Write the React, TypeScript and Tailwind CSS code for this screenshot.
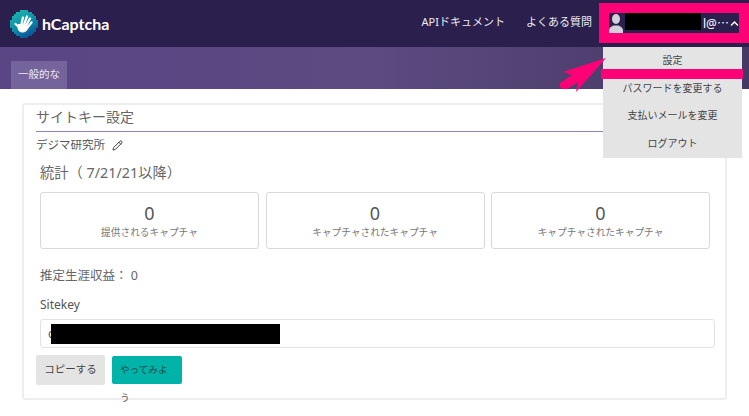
import React from 'react';
import { FaChevronUp } from 'react-icons/fa';
import { LuPencil } from 'react-icons/lu';

const stats = ['提供されるキャプチャ', 'キャプチャされたキャプチャ', 'キャプチャされたキャプチャ'];

const Logo: React.FC = () => (
  <svg width="28" height="28" viewBox="0 0 28 28" className="shrink-0">
    <defs>
      <linearGradient id="logo-fill" x1="0.150" y1="0.100" x2="0.650" y2="1">
        <stop offset="0" stopColor="#19b3ad" />
        <stop offset="0.550" stopColor="#0c8aa6" />
        <stop offset="1" stopColor="#0a4f9a" />
      </linearGradient>
    </defs>
    <path
      d="M10 0h8v2h4v2h2v2h2v4h2v8h-2v4h-2v2h-2v2h-4v2h-8v-2H6v-2H4v-2H2v-4H0v-8h2V6h2V4h2V2h4z"
      fill="url(#logo-fill)"
    />
    {/* waving hand */}
    <g stroke="#fff" strokeWidth="2.300" strokeLinecap="round" fill="none">
      <path d="M11 16L13 7.500" />
      <path d="M13.500 16L17 6.500" />
      <path d="M15.500 16.500L20 8.500" />
      <path d="M17 18L21.500 12.500" />
      <path d="M11 19L5.500 14" />
    </g>
    <path d="M8 14h9l1.500 4c-1.500 3-3.500 4.500-6 4.500-2.800 0-4.500-2-5-4.500z" fill="#fff" />
  </svg>
);

const Avatar: React.FC = () => (
  <svg width="14" height="20" viewBox="0 0 14 20" className="shrink-0">
    <ellipse cx="7" cy="6" rx="4" ry="5" fill="#d2d0da" />
    <path d="M0 20v-3c.5-3 3-3.500 4.500-4.500h5c1.500 1 4 1.500 4.500 4.500v3z" fill="#d2d0da" />
  </svg>
);

const App: React.FC = () => {
  return (
    <div lang="ja" className="relative w-[749px] h-[416px] overflow-hidden bg-white font-['Noto_Sans','Noto_Sans_CJK_JP',sans-serif] text-[#555]">
      <header className="h-[47px] bg-[#2a1f4d] flex items-center pl-[10px]">
        <Logo />
        <span className="ml-[4px] font-['Lato',sans-serif] text-[16px] font-bold text-white">hCaptcha</span>
        <nav className="ml-auto flex items-center text-[11px] text-[#ecebf2]">
          <span className="mb-[2px]">APIドキュメント</span>
          <span className="ml-[21px] mb-[2px]">よくある質問</span>
          {/* account button */}
          <div className="ml-[7px] w-[150px] h-[40px] mt-[-1px] box-border border-[10px] border-[#ff0077] flex items-center bg-[#2a1f4d] text-white">
            <Avatar />
            <span className="ml-[2px] w-[76px] h-[17px] bg-black mb-[3px]" />
            <span className="ml-[2px] text-[12px]">
              l@<span className="font-['Noto_Sans_CJK_JP',sans-serif]">⋯</span>
            </span>
            <FaChevronUp className="ml-[1px] text-[9px]" />
          </div>
        </nav>
      </header>

      <div className="h-[42px] bg-gradient-to-r from-[#5a4585] via-[#5c4a80] to-[#453864] flex items-end pl-[11px]">
        <div className="h-[28px] w-[56px] bg-[#75649b] flex items-center justify-center text-[10.500px] text-[#eeeaf5]">
          一般的な
        </div>
      </div>

      <main className="pt-[14px] pl-[22px]">
        <section className="w-[705px] h-[297px] border-2 border-[#eeeeee] rounded-[3px] px-[12px]">
          <h2 className="h-[27px] pb-[4px] flex items-center text-[14px] text-[#666] border-b border-[#8f80c4]">サイトキー設定</h2>
          <div className="mt-[5px] flex items-center gap-[7px] text-[11.500px] leading-[16px] text-[#555]">
            デジマ研究所
            <LuPencil className="text-[11px] text-[#333]" />
          </div>
          <div className="pl-[4px]">
            <h3 className="mt-[10px] text-[14.300px] leading-[20px] text-[#666]">統計（ 7/21/21以降）</h3>
            <div className="mt-[9px] flex gap-[6.500px]">
              {stats.map((label, i) => (
                <div key={i} className="w-[219px] h-[57px] border border-[#d9d9d9] rounded-[3px] flex flex-col items-center justify-center">
                  <span className="text-[18px] leading-[24px] text-[#555]">0</span>
                  <span className="text-[9.700px] leading-[16px] text-[#777]">{label}</span>
                </div>
              ))}
            </div>
            <p className="mt-[18px] text-[12.500px] leading-[18px] text-[#666]">推定生涯収益： 0</p>
            <p className="mt-[12px] text-[12px] leading-[16px] text-[#555]">Sitekey</p>
            <div className="mt-[6px] relative w-[675px] h-[29px] border border-[#e2e2e2] rounded-[3px] flex items-center pl-[7px] text-[12px] text-[#555]">
              c
              <span className="absolute left-[10px] top-[4px] w-[229px] h-[20px] bg-black" />
            </div>
          </div>
          <div className="mt-[7px] flex items-start gap-[7px]">
            <button className="w-[69px] h-[30px] bg-[#e4e4e4] rounded-[2px] text-[10.500px] text-[#444]">コピーする</button>
            <button className="mt-[1px] w-[70px] h-[28px] bg-[#00b3a8] rounded-[2px] pl-[8px] pt-[7px] text-left text-[9.600px] text-[#2b4a4a] flex flex-col items-start">
              <span className="leading-[14px]">やってみよ</span>
              <span className="mt-[14px] leading-[14px] text-[#555]">う</span>
            </button>
          </div>
        </section>
      </main>

      {/* account dropdown */}
      <div className="absolute left-[603px] top-[47px] w-[139px] h-[111px] bg-[#e4e4e4] flex flex-col items-center text-[10px] text-[#444]">
        <span className="mt-[6px] leading-[14px]">設定</span>
        <span className="mt-[14px] leading-[14px]">パスワードを変更する</span>
        <span className="mt-[13px] leading-[14px]">支払いメールを変更</span>
        <span className="mt-[14px] leading-[14px]">ログアウト</span>
      </div>

      {/* callout bar and arrow over the dropdown */}
      <div className="absolute left-[601px] top-[69px] w-[142px] h-[10px] bg-[#ff0077]" />
      <svg className="absolute left-[555px] top-[50px]" width="60" height="45" viewBox="0 0 60 45">
        <path d="M51 8L8 22l9 3-12 8v4l3 2h4l11-7-2 10z" fill="#ff0077" />
      </svg>
    </div>
  );
};

export default App;
